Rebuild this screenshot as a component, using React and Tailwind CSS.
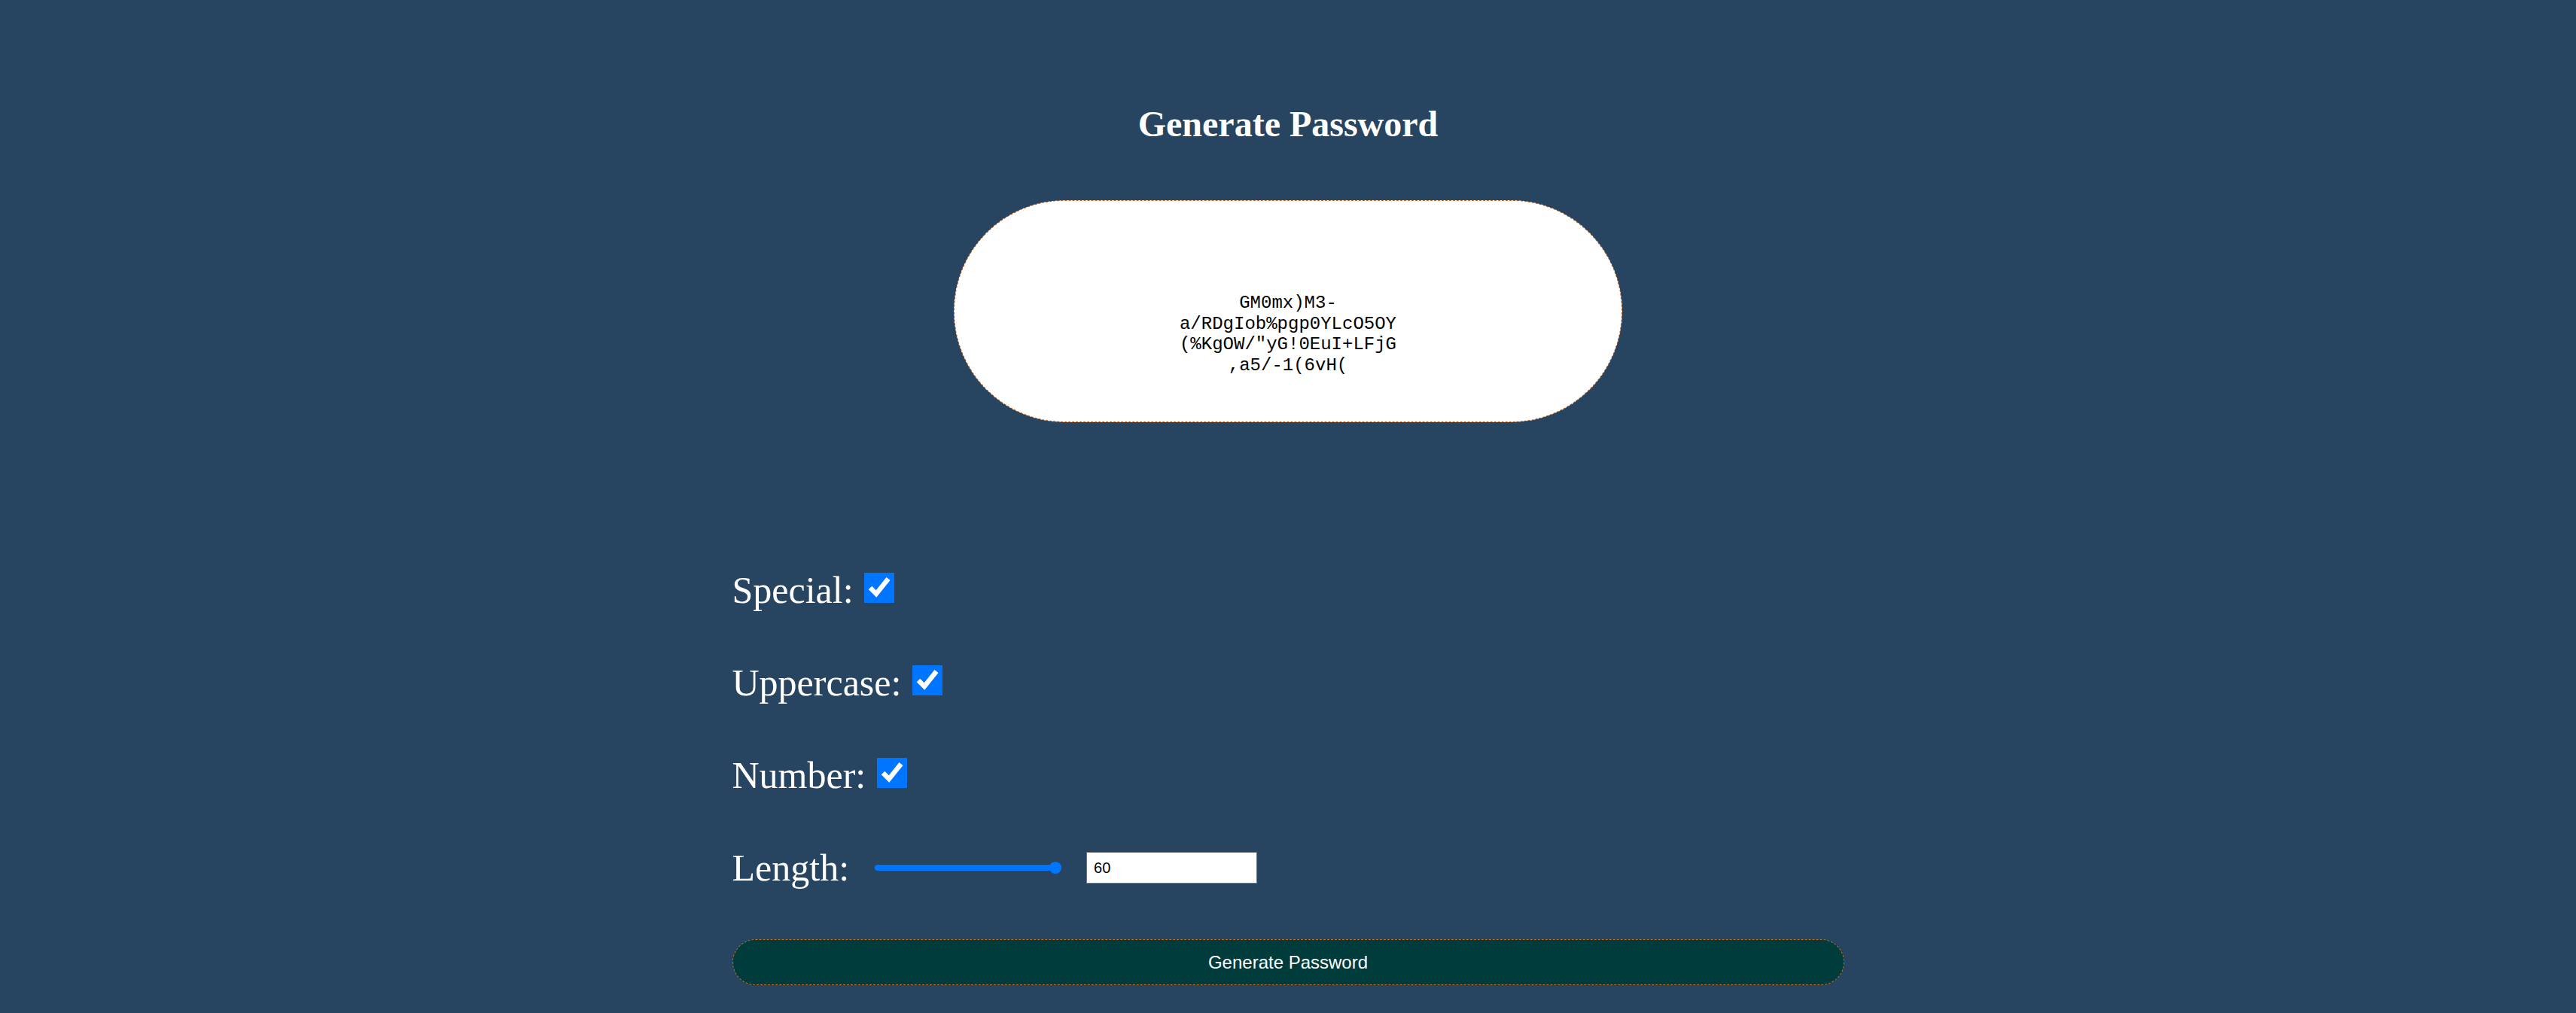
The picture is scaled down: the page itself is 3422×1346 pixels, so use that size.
import { useState } from "react";

// password is shown broken into lines, the same way the box wraps it
const PASSWORD_LINES = [
  "GM0mx)M3-",
  "a/RDgIob%pgp0YLcO5OY",
  "(%KgOW/\"yG!0EuI+LFjG",
  ",a5/-1(6vH(",
];

function OptionRow({ label, checked, onChange }) {
  return (
    <div className="h-[56px] leading-[56px] text-[50px] text-white whitespace-nowrap">
      {label}{" "}
      <input
        type="checkbox"
        checked={checked}
        onChange={onChange}
        className="m-0 ml-[2px] w-[40px] h-[40px] align-baseline accent-[#0075ff]"
      />
    </div>
  );
}

export default function App() {
  const [special, setSpecial] = useState(true);
  const [upper, setUpper] = useState(true);
  const [number, setNumber] = useState(true);
  const [length, setLength] = useState("60");

  return (
    <div className="min-h-screen bg-[#274560] flex flex-col items-center font-['Liberation_Serif',serif]">
      <h2 className="mt-[138px] text-[48px] leading-[53px] font-bold text-white">
        Generate Password
      </h2>

      {/* Password output */}
      <div className="mt-[75px] w-[888px] h-[295px] box-border rounded-full bg-white border border-dashed border-[#d2691e] pt-[122px] flex flex-col items-center font-['Liberation_Mono',monospace] text-[24px] leading-[27.5px] text-black">
        {PASSWORD_LINES.map((line) => (
          <div key={line} className="whitespace-pre">{line}</div>
        ))}
      </div>

      {/* Options */}
      <div className="mt-[195px] w-[1477px] flex flex-col gap-[67px]">
        <OptionRow label="Special:" checked={special} onChange={() => setSpecial(!special)} />
        <OptionRow label="Uppercase:" checked={upper} onChange={() => setUpper(!upper)} />
        <OptionRow label="Number:" checked={number} onChange={() => setNumber(!number)} />

        <div className="h-[56px] flex items-center">
          <span className="leading-[56px] text-[50px] text-white">Length:</span>
          <div className="relative ml-[34px] w-[248px] h-[8px] rounded-full bg-[#0075ff]">
            <span className="absolute right-0 top-1/2 -translate-y-1/2 w-[16px] h-[16px] rounded-full bg-[#0075ff]" />
          </div>
          <input
            type="text"
            value={length}
            onChange={(e) => setLength(e.target.value)}
            className="ml-[33px] w-[227px] h-[42px] box-border border border-[#767676] bg-white pl-[9px] text-[20px] text-black font-['Liberation_Sans',sans-serif] outline-none"
          />
        </div>

        <button className="w-full h-[61px] rounded-full bg-[#013c3c] border border-dashed border-[#d2691e] text-white text-[24px] font-['Liberation_Sans',sans-serif]">
          Generate Password
        </button>
      </div>
    </div>
  );
}
